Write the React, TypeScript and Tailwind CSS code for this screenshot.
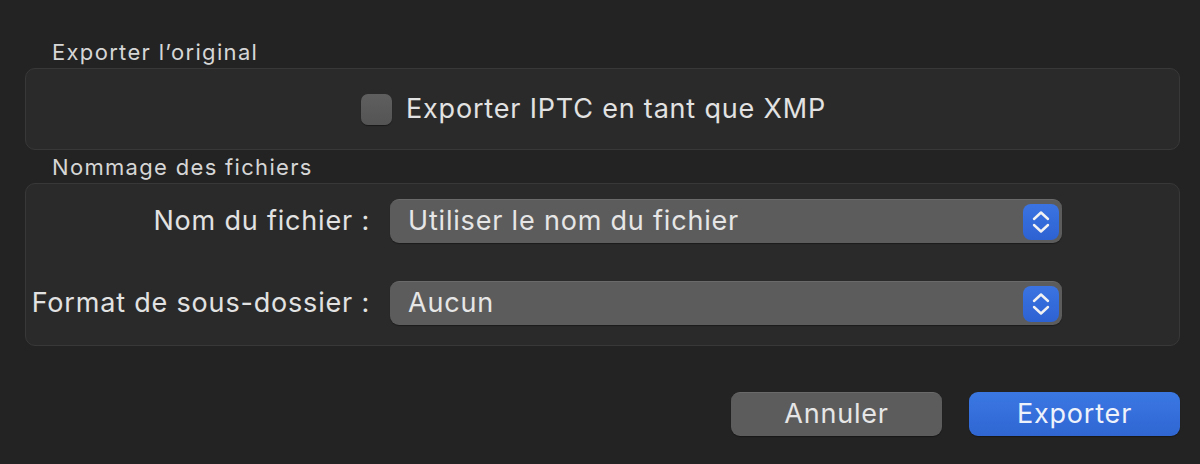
import React from "react";

function Stepper() {
  return (
    <div className="flex h-[36px] w-[36px] items-center justify-center rounded-[8px] bg-gradient-to-b from-[#3b74e2] to-[#2d62d2]">
      <svg width="20" height="26" viewBox="0 0 20 26" fill="none">
        <path d="M3 10 L10 3.5 L17 10" stroke="#f2f2f2" strokeWidth="2.4" strokeLinecap="round" strokeLinejoin="round" />
        <path d="M3 16 L10 22.5 L17 16" stroke="#f2f2f2" strokeWidth="2.4" strokeLinecap="round" strokeLinejoin="round" />
      </svg>
    </div>
  );
}

function PopupRow({ label, value }: { label: string; value: string }) {
  return (
    <div className="flex items-center">
      <div className="w-[364px] pr-[20px] text-right text-[27px] leading-[44px] tracking-[0.03em] text-[#e2e2e2]">
        {label}
      </div>
      <div className="flex h-[44px] w-[672px] items-center justify-between rounded-[9px] border-t border-[#6a6a6a] bg-[#5c5c5c] pl-[18px] pr-[3px] shadow-[0_1px_1px_rgba(0,0,0,0.35)]">
        <span className="text-[27px] tracking-[0.03em] text-[#e6e6e6]">{value}</span>
        <Stepper />
      </div>
    </div>
  );
}

export default function App() {
  return (
    <div className="h-[464px] w-[1200px] overflow-hidden bg-[#232323] pl-[25px] pr-[20px] pt-[40px] font-['Inter',sans-serif] text-[#e2e2e2]">
      {/* Exporter l'original */}
      <div className="h-[24px] pl-[27px] text-[22px] leading-[24px] tracking-[0.06em] text-[#d6d6d6]">
        Exporter l’original
      </div>
      <div className="mt-[4px] flex h-[82px] items-center justify-center gap-[14px] rounded-[10px] border border-[#383838] bg-[#2a2a2a] pr-[18px]">
        <div className="h-[31px] w-[31px] rounded-[7px] bg-gradient-to-b from-[#5f5f5f] to-[#545454] shadow-[0_1px_1px_rgba(0,0,0,0.4)]" />
        <span className="text-[27px] leading-[32px] tracking-[0.03em] text-[#e2e2e2]">Exporter IPTC en tant que XMP</span>
      </div>

      {/* Nommage des fichiers */}
      <div className="mt-[5px] h-[24px] pl-[27px] text-[22px] leading-[24px] tracking-[0.06em] text-[#d6d6d6]">
        Nommage des fichiers
      </div>
      <div className="mt-[4px] flex h-[163px] flex-col gap-[38px] rounded-[10px] border border-[#383838] bg-[#2a2a2a] pt-[15px]">
        <PopupRow label="Nom du fichier :" value="Utiliser le nom du fichier" />
        <PopupRow label="Format de sous-dossier :" value="Aucun" />
      </div>

      {/* Buttons */}
      <div className="mt-[46px] flex justify-end gap-[27px]">
        <button className="h-[44px] w-[211px] rounded-[9px] border-t border-[#6a6a6a] bg-[#5c5c5c] text-[27px] tracking-[0.03em] text-[#e6e6e6] shadow-[0_1px_1px_rgba(0,0,0,0.35)]">
          Annuler
        </button>
        <button className="h-[44px] w-[211px] rounded-[9px] bg-gradient-to-b from-[#3b78e4] to-[#2f66d2] text-[27px] tracking-[0.03em] text-[#eef2fb] shadow-[0_1px_1px_rgba(0,0,0,0.35)]">
          Exporter
        </button>
      </div>
    </div>
  );
}
